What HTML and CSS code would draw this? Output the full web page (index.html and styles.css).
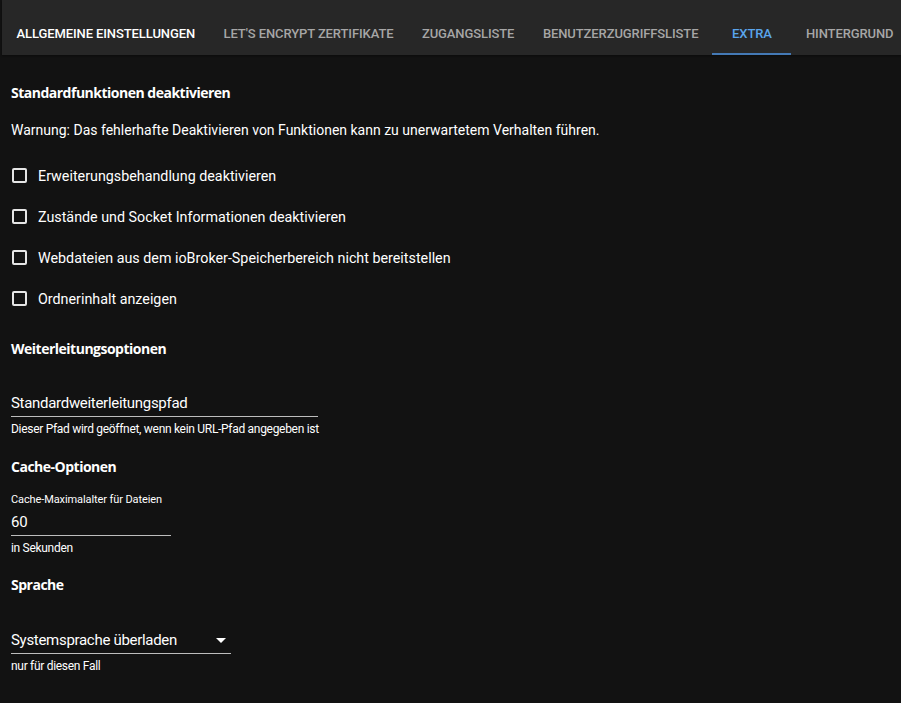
FILE: index.html
```html
<!DOCTYPE html>
<html lang="de">
<head>
<meta charset="utf-8">
<title>Extra</title>
<link rel="stylesheet" href="styles.css">
</head>
<body>
<div class="tabbar">
  <div class="tab tab-hover">Allgemeine Einstellungen</div>
  <div class="tab">Let's Encrypt Zertifikate</div>
  <div class="tab">Zugangsliste</div>
  <div class="tab">Benutzerzugriffsliste</div>
  <div class="tab tab-active">Extra</div>
  <div class="tab">Hintergrund</div>
</div>
<main class="content">
  <h2 class="heading h-first">Standardfunktionen deaktivieren</h2>
  <p class="warning">Warnung: Das fehlerhafte Deaktivieren von Funktionen kann zu unerwartetem Verhalten führen.</p>
  <div class="checks">
    <label class="check"><span class="box"></span><span>Erweiterungsbehandlung deaktivieren</span></label>
    <label class="check"><span class="box"></span><span>Zustände und Socket Informationen deaktivieren</span></label>
    <label class="check"><span class="box"></span><span>Webdateien aus dem ioBroker-Speicherbereich nicht bereitstellen</span></label>
    <label class="check"><span class="box"></span><span>Ordnerinhalt anzeigen</span></label>
  </div>
  <h2 class="heading h-redirect">Weiterleitungsoptionen</h2>
  <div class="field field-path">
    <div class="input">Standardweiterleitungspfad</div>
    <div class="helper">Dieser Pfad wird geöffnet, wenn kein URL-Pfad angegeben ist</div>
  </div>
  <h2 class="heading h-cache">Cache-Optionen</h2>
  <div class="field field-cache">
    <div class="label">Cache-Maximalalter für Dateien</div>
    <div class="input">60</div>
    <div class="helper">in Sekunden</div>
  </div>
  <h2 class="heading h-lang">Sprache</h2>
  <div class="field field-lang">
    <div class="input select"><span>Systemsprache überladen</span><span class="arrow"></span></div>
    <div class="helper">nur für diesen Fall</div>
  </div>
</main>
</body>
</html>
```
FILE: styles.css
```css
html, body {
  margin: 0;
  padding: 0;
  background: #121212;
  color: #ffffff;
  font-family: Roboto, "Liberation Sans", sans-serif;
}
.tabbar {
  margin-left: 2px;
  height: 55px;
  background: #272727;
  display: flex;
  box-shadow: 0 1px 2px rgba(0,0,0,0.4);
  overflow: hidden;
}
.tab {
  box-sizing: border-box;
  flex-shrink: 0;
  height: 55px;
  padding: 12px 14px 0 14.5px;
  min-width: 79px;
  display: flex;
  align-items: center;
  justify-content: center;
  text-transform: uppercase;
  font-size: 13px;
  font-weight: 500;
  letter-spacing: -0.1px;
  color: #a6a6a6;
  white-space: nowrap;
}
.tab-hover { color: #ffffff; }
.tab-active {
  color: #5aa5ec;
  border-bottom: 2px solid #4479b5;
  padding-top: 14px;
  padding-left: 13px;
  padding-right: 13px;
}
.content {
  padding: 0 11px;
}
.heading {
  margin: 0;
  font-family: "Open Sans", Roboto, sans-serif;
  font-size: 14px;
  font-weight: 700;
  letter-spacing: -0.5px;
  line-height: 20px;
}
.h-first { margin-top: 28px; }
.warning {
  margin: 17px 0 0;
  font-size: 14px;
  line-height: 20px;
}
.checks {
  margin-top: 25px;
  display: flex;
  flex-direction: column;
  gap: 20px;
}
.check {
  display: flex;
  align-items: center;
  height: 21px;
  font-size: 14.3px;
  gap: 11px;
}
.box {
  box-sizing: border-box;
  width: 15px;
  height: 15px;
  margin-left: 1px;
  border: 2px solid #e6e6e6;
  border-radius: 2px;
}
.h-redirect { margin-top: 30px; }
.field-path { width: 307px; margin-top: 33px; }
.input {
  font-size: 15px;
  letter-spacing: -0.3px;
  line-height: 22px;
  padding-bottom: 2px;
  border-bottom: 1px solid #bdbdbd;
}
.helper {
  font-size: 12px;
  letter-spacing: -0.3px;
  line-height: 14px;
  margin-top: 5px;
  white-space: nowrap;
}
.h-cache { margin-top: 21px; }
.field-cache { width: 160px; margin-top: 16px; }
.label {
  font-size: 11px;
  letter-spacing: -0.1px;
  line-height: 14px;
  margin-bottom: 4px;
}
.h-lang { margin-top: 20px; }
.field-lang { width: 220px; margin-top: 34px; }
.select {
  display: flex;
  justify-content: space-between;
  align-items: center;
}
.arrow {
  width: 0;
  height: 0;
  margin-right: 5px;
  border-left: 5px solid transparent;
  border-right: 5px solid transparent;
  border-top: 5px solid #ffffff;
}
```
